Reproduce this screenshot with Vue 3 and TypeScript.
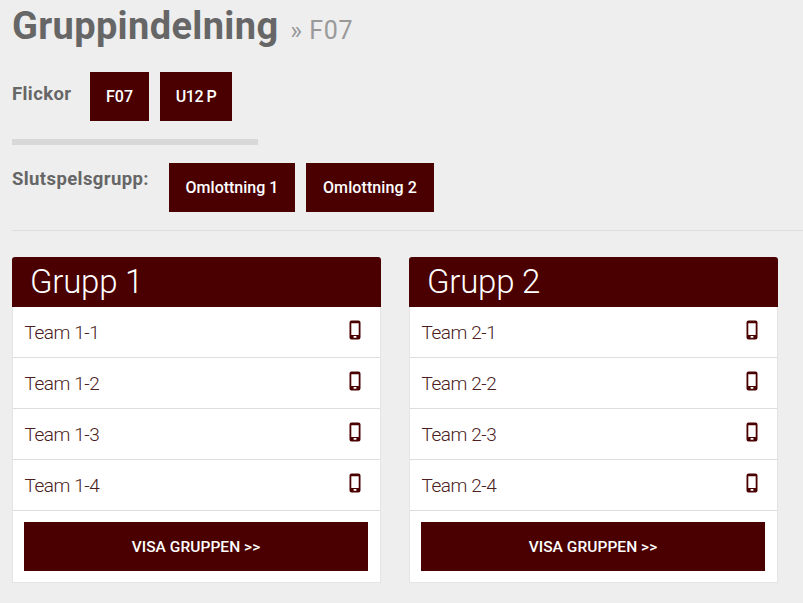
<script setup lang="ts">
const groups = [
  { name: 'Grupp 1', teams: ['Team 1-1', 'Team 1-2', 'Team 1-3', 'Team 1-4'] },
  { name: 'Grupp 2', teams: ['Team 2-1', 'Team 2-2', 'Team 2-3', 'Team 2-4'] },
];
</script>

<template>
  <div class="page">
    <h1 class="title">Gruppindelning <small>» F07</small></h1>

    <div class="filter first">
      <span class="label flickor">Flickor</span>
      <a class="btn w59">F07</a>
      <a class="btn w72">U12 P</a>
    </div>

    <div class="bar"></div>

    <div class="filter">
      <span class="label slut">Slutspelsgrupp:</span>
      <a class="btn w126">Omlottning 1</a>
      <a class="btn w128">Omlottning 2</a>
    </div>

    <div class="line"></div>

    <div class="groups">
      <section v-for="g in groups" :key="g.name" class="panel">
        <h2 class="panel-head">{{ g.name }}</h2>
        <ul class="teams">
          <li v-for="t in g.teams" :key="t" class="team">
            <span>{{ t }}</span>
            <svg class="phone" width="12" height="20" viewBox="0 0 12 20">
              <path fill="#4a0000" fill-rule="evenodd" d="M2.5 0.5h7a2 2 0 0 1 2 2v15a2 2 0 0 1-2 2h-7a2 2 0 0 1-2-2v-15a2 2 0 0 1 2-2zM2.3 3.2v11.8h7.4V3.2zM4.6 16v1.8h2.8V16z" />
            </svg>
          </li>
        </ul>
        <div class="panel-foot">
          <a class="show">VISA GRUPPEN &gt;&gt;</a>
        </div>
      </section>
    </div>
  </div>
</template>

<style>
html,
body {
  margin: 0;
  background: #eeeeee;
}
</style>

<style scoped>
.page {
  height: 603px;
  box-sizing: border-box;
  padding-left: 12px;
  overflow: hidden;
  background: #eeeeee;
  font-family: Roboto, "Open Sans", sans-serif;
}

.title {
  margin: 0;
  height: 72px;
  padding-top: 3px;
  box-sizing: border-box;
  font-size: 38px;
  line-height: 46px;
  font-weight: 700;
  letter-spacing: 0.35px;
  color: #666666;
}

.title small {
  margin-left: 2px;
  font-size: 25px;
  font-weight: 400;
  letter-spacing: 0.6px;
  color: #999999;
}

.filter {
  display: flex;
  align-items: flex-start;
}

.label {
  font-size: 18.5px;
  line-height: 26px;
  font-weight: 700;
  letter-spacing: 0.4px;
  color: #666666;
}

.flickor {
  width: 78px;
  padding-top: 9px;
}

.slut {
  width: 157px;
  padding-top: 3px;
}

.btn {
  box-sizing: border-box;
  height: 49px;
  margin-right: 11px;
  display: flex;
  align-items: center;
  justify-content: center;
  background: #4a0000;
  color: #ffffff;
  font-size: 16px;
  font-weight: 500;
}

.w59 {
  width: 59px;
}

.w72 {
  width: 72px;
  letter-spacing: -0.5px;
}

.w126 {
  width: 126px;
}

.w128 {
  width: 128px;
  letter-spacing: 0.1px;
}

.bar {
  width: 246px;
  height: 6px;
  margin: 18px 0;
  background: #d8d8d8;
}

.line {
  height: 1px;
  margin-top: 18px;
  background: #dddddd;
}

.groups {
  display: flex;
  gap: 28px;
  margin-top: 26px;
}

.panel {
  box-sizing: border-box;
  width: 369px;
  height: 326px;
  background: #ffffff;
  border: 1px solid #e4e4e4;
  border-top: 0;
  border-radius: 3px 3px 0 0;
}

.panel-head {
  margin: 0 -1px;
  height: 50px;
  padding-left: 18px;
  border-radius: 3px 3px 0 0;
  background: #4a0000;
  color: #ffffff;
  font-size: 33px;
  line-height: 49px;
  font-weight: 300;
  letter-spacing: -0.25px;
}

.teams {
  margin: 0;
  padding: 0;
  list-style: none;
}

.team {
  box-sizing: border-box;
  height: 51px;
  padding: 0 19px 0 11.5px;
  display: flex;
  align-items: center;
  justify-content: space-between;
  border-bottom: 1px solid #dddddd;
  color: #4a2020;
  font-size: 19px;
  font-weight: 300;
  letter-spacing: -0.45px;
}

.phone {
  margin-top: -4px;
}

.panel-foot {
  padding: 11px 12px 0 11px;
}

.show {
  height: 49px;
  display: flex;
  align-items: center;
  justify-content: center;
  background: #4a0000;
  color: #ffffff;
  font-size: 15.5px;
  font-weight: 500;
  letter-spacing: 0.05px;
}
</style>
